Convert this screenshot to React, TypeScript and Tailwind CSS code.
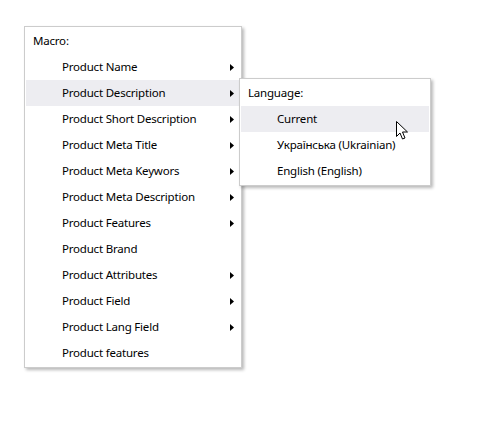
import React from "react";

const items: { label: string; sub?: boolean }[] = [
  { label: "Product Name", sub: true },
  { label: "Product Description", sub: true },
  { label: "Product Short Description", sub: true },
  { label: "Product Meta Title", sub: true },
  { label: "Product Meta Keywors", sub: true },
  { label: "Product Meta Description", sub: true },
  { label: "Product Features", sub: true },
  { label: "Product Brand" },
  { label: "Product Attributes", sub: true },
  { label: "Product Field", sub: true },
  { label: "Product Lang Field", sub: true },
  { label: "Product features" },
];

const langs = ["Current", "Українська (Ukrainian)", "English (English)"];

function Arrow() {
  return (
    <svg width="4" height="7" viewBox="0 0 4 7" className="absolute left-[204px] top-[10px]">
      <path d="M0 0 L4 3.5 L0 7 Z" fill="#000" />
    </svg>
  );
}

function Cursor() {
  return (
    <svg width="13" height="20" viewBox="0 0 13 20" className="absolute left-[396px] top-[121px]">
      <path
        d="M0.5 0.5 L0.5 15.5 L4 12 L6.5 18 L9 17 L6.5 11 L11.5 11 Z"
        fill="#fff"
        stroke="#000"
        strokeWidth="1"
        strokeLinejoin="miter"
      />
    </svg>
  );
}

export default function App() {
  return (
    <div
      className="relative h-[426px] w-[491px] bg-white text-[11.5px] tracking-[-0.2px] text-black"
      style={{ fontFamily: '"Segoe UI", "Noto Sans", sans-serif' }}
    >
      <div className="absolute left-[24px] top-[26px] w-[218px] border border-[#cccccc] bg-white p-px shadow-[2px_2px_3px_rgba(0,0,0,0.28)]">
        <div className="flex h-[26px] items-center pl-[7px]">Macro:</div>
        {items.map((it, i) => (
          <div
            key={it.label}
            className={`relative flex h-[26px] items-center pl-[36px] ${i === 1 ? "bg-[#ededf1]" : ""}`}
          >
            {it.label}
            {it.sub && <Arrow />}
          </div>
        ))}
      </div>

      <div className="absolute left-[239px] top-[78px] w-[192px] border border-[#cccccc] bg-white p-px shadow-[2px_2px_3px_rgba(0,0,0,0.28)]">
        <div className="flex h-[26px] items-center pl-[7px]">Language:</div>
        {langs.map((l, i) => (
          <div
            key={l}
            className={`flex h-[26px] items-center pl-[36px] ${i === 0 ? "bg-[#ededf1]" : ""}`}
          >
            {l}
          </div>
        ))}
      </div>

      <Cursor />
    </div>
  );
}
